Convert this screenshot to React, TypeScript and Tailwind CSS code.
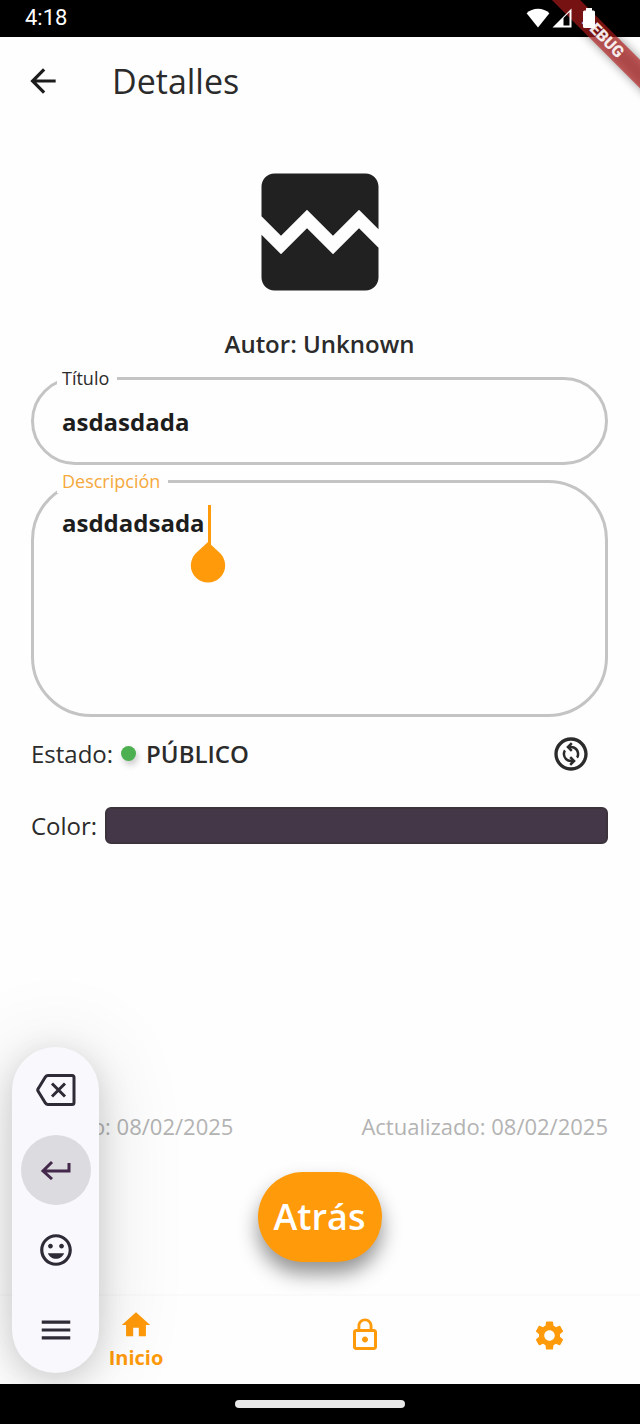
import type { ReactNode } from "react";
import {
  MdArrowBack,
  MdBrokenImage,
  MdHome,
  MdLockOutline,
  MdMenu,
  MdOutlineChangeCircle,
  MdSettings,
  MdTagFaces,
} from "react-icons/md";

function StatusBar() {
  return (
    <div className="flex h-[37px] items-center justify-between bg-black pb-0.5 pl-[25px] pr-11 text-white">
      <span className="font-[Roboto,sans-serif] text-[22px] leading-6">4:18</span>
      <div className="relative z-20 flex items-center">
        <svg width="24" height="20" viewBox="0 0 24 20" fill="#fff" aria-hidden="true">
          <path d="M12 19.5.6 5.2C3.6 2.300 7.600.7 12 .7s8.400 1.600 11.400 4.500z" />
        </svg>
        <svg className="ml-0.5" width="20" height="20" viewBox="0 0 20 20" aria-hidden="true">
          <path fill="#fff" fillRule="evenodd" d="M.5 19.500 19.500.5v19zM11.500 10v7.500H17.500V4z" />
        </svg>
        <svg className="ml-2.5" width="14" height="20" viewBox="0 0 14 20" fill="#fff" aria-hidden="true">
          <path d="M4 0h6v2.500h1.500A1.500 1.500 0 0 1 13 4v14.500a1.500 1.500 0 0 1-1.500 1.500h-9A1.500 1.500 0 0 1 1 18.500V4a1.500 1.500 0 0 1 1.500-1.500H4z" />
        </svg>
      </div>
    </div>
  );
}

function DebugBanner() {
  return (
    <div className="pointer-events-none absolute right-0 top-0 z-10 size-32 overflow-hidden">
      <div className="absolute -right-[63px] top-[27px] h-5 w-[200px] rotate-45">
        <div className="absolute inset-0 bg-black/40 blur-[5px]" />
        <div className="absolute inset-0 bg-[#b71c1c]/65" />
        <div className="relative text-center font-[Roboto,sans-serif] text-base font-black leading-5 text-white/90">
          DEBUG
        </div>
      </div>
    </div>
  );
}

function NavItem({ label, children, active }: { label: string; children: ReactNode; active?: boolean }) {
  return (
    <a
      href="#"
      aria-label={label}
      aria-current={active ? "page" : undefined}
      className={
        active
          ? "flex flex-col items-center justify-center gap-0.5 text-[#ff9a0a]"
          : "flex flex-col items-center justify-center pb-2.5 text-[#ff9a0a]"
      }
    >
      {children}
      {active && <span className="text-xl font-bold leading-7">{label}</span>}
    </a>
  );
}

function KeyboardToolbar() {
  const key = "flex size-[70px] items-center justify-center rounded-full";
  return (
    <div
      role="toolbar"
      aria-label="Teclado"
      className="absolute bottom-[51px] left-3 flex w-[87px] flex-col items-center gap-2.5 rounded-full bg-[#f9f8fd] py-2 text-[#2e2a36] shadow-[0_8px_32px_rgba(0,0,0,0.16),0_0_90px_rgba(0,0,0,0.12)]"
    >
      <button aria-label="Borrar" className={key}>
        <svg width="40" height="34" viewBox="0 0 40 34" fill="none" stroke="currentColor" strokeWidth="3" aria-hidden="true">
          <path strokeLinejoin="round" d="M12 2.500h24a2 2 0 0 1 2 2v25a2 2 0 0 1-2 2H12a3 3 0 0 1-2.500-1.300L2.300 18.500a2.500 2.500 0 0 1 0-3L9.500 3.800A3 3 0 0 1 12 2.500z" />
          <path d="m16 10.500 13 13m0-13-13 13" />
        </svg>
      </button>
      <button aria-label="Intro" className="flex size-[70px] items-center justify-center rounded-full bg-[#dcdbdf]">
        <svg width="32" height="20" viewBox="0 0 32 20" fill="none" stroke="#43284b" strokeWidth="3" aria-hidden="true">
          <path d="M29 3v8H3.500M12 2l-9 9 9 8" />
        </svg>
      </button>
      <button aria-label="Emojis" className={key}>
        <MdTagFaces size={38} />
      </button>
      <button aria-label="Menú" className={key}>
        <MdMenu size={38} />
      </button>
    </div>
  );
}

export default function App() {
  return (
    <div className="relative flex min-h-screen flex-col overflow-hidden bg-[#fefefe] font-['Open_Sans',sans-serif] text-[#2b2b2b]">
      <StatusBar />
      <DebugBanner />

      <header className="flex h-[87px] items-center gap-[50px] px-6">
        <button aria-label="Volver" className="text-[#1c1c1c]">
          <MdArrowBack size={38} />
        </button>
        <h1 className="text-[34px] leading-10">Detalles</h1>
      </header>

      <main className="flex flex-1 flex-col pl-[31px] pr-8 pt-[30px]">
        <MdBrokenImage size={156} className="self-center text-[#212121]" />
        <p className="mt-4 text-center text-2xl font-semibold leading-9">Autor: Unknown</p>

        <fieldset className="mt-[5px] min-w-0 rounded-[44px] border-[3px] border-[#c4c4c4] pb-2.5">
          <legend className="ml-[23px] px-[5px] pr-2 text-lg leading-[23px]">
            <label htmlFor="titulo">Título</label>
          </legend>
          <input
            id="titulo"
            defaultValue="asdasdada"
            className="block h-[62px] w-full bg-transparent px-7 text-2xl font-bold text-[#1d1d1d] outline-none"
          />
        </fieldset>

        <fieldset className="relative mt-[5px] min-w-0 rounded-[60px] border-[3px] border-[#c4c4c4]">
          <legend className="ml-[23px] px-[5px] pr-2 text-lg leading-[23px] text-[#f5a83c]">
            <label htmlFor="descripcion">Descripción</label>
          </legend>
          <textarea
            id="descripcion"
            defaultValue="asddadsada"
            className="block h-[221px] w-full resize-none bg-transparent px-7 pt-2.5 text-2xl font-bold leading-10 text-[#1d1d1d] outline-none"
          />
          <svg className="absolute left-[156px] top-2.5" width="36" height="80" viewBox="0 0 36 80" fill="#ff9a0a" aria-hidden="true">
            <path d="M18 2h3v40h-3z" />
            <path d="M18 39l12.200 11.300a17.200 17.200 0 1 1-24.400 0z" />
          </svg>
        </fieldset>

        <div className="mt-[18px] flex h-[37px] items-center">
          <span className="text-2xl">Estado:</span>
          <span className="ml-2 size-[15px] rounded-full bg-[#4caf50] shadow-[2px_4px_6px_rgba(0,0,0,0.2)]" />
          <span className="ml-2.5 text-2xl font-semibold">PÚBLICO</span>
          <button aria-label="Cambiar estado" className="ml-auto mr-[17px]">
            <MdOutlineChangeCircle size={40} />
          </button>
        </div>

        <div className="mt-[35px] flex h-[37px] items-center gap-2">
          <span className="text-2xl">Color:</span>
          <button aria-label="Elegir color" className="h-full flex-1 rounded-md border-2 border-[#3c333d] bg-[#443848]" />
        </div>

        <div className="mt-auto flex justify-between text-[22px] leading-6 text-[#b3b3b3]">
          <span>Creado: 08/02/2025</span>
          <span>Actualizado: 08/02/2025</span>
        </div>
        <button className="mb-8 mt-[34px] h-[90px] self-center rounded-full bg-[#ff9a0a] px-4 text-4xl font-semibold text-white shadow-[0_12px_20px_rgba(0,0,0,0.42)]">
          Atrás
        </button>
      </main>

      <nav className="grid h-[90px] grid-cols-[272fr_186fr_182fr] border-t-2 border-[#fafafa]">
        <NavItem label="Inicio" active>
          <MdHome size={34} />
        </NavItem>
        <NavItem label="Bloqueo">
          <MdLockOutline size={36} />
        </NavItem>
        <NavItem label="Ajustes">
          <MdSettings size={35} />
        </NavItem>
      </nav>

      <KeyboardToolbar />

      <div className="relative flex h-10 items-center justify-center bg-black">
        <div className="h-2 w-[170px] rounded-full bg-[#e8e8e8]" />
      </div>
    </div>
  );
}
